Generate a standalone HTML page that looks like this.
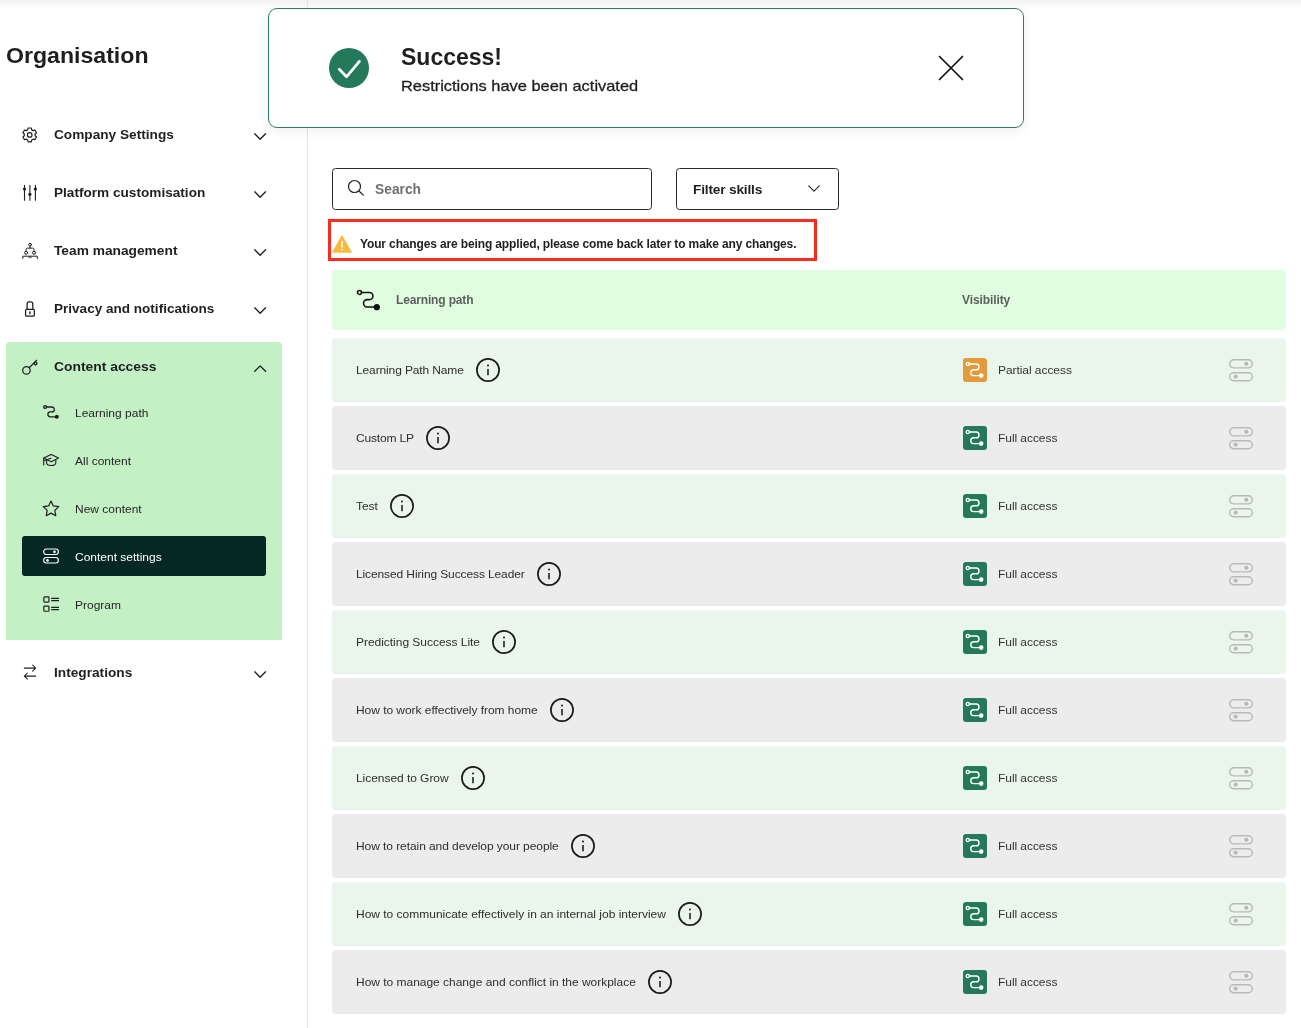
<!DOCTYPE html>
<html>
<head>
<meta charset="utf-8">
<title>Organisation</title>
<style>
*{box-sizing:border-box;margin:0;padding:0}
html,body{width:1301px;height:1028px;overflow:hidden;background:#fff}
body{font-family:"Liberation Sans",sans-serif;color:#1a1a1a;position:relative;will-change:transform}
svg{display:block;overflow:visible}
.topshadow{position:absolute;left:0;top:0;width:1301px;height:10px;background:linear-gradient(#f2f2f2 0,#f4f4f4 20%,#f8f8f8 38%,#fbfbfb 52%,#fdfdfd 75%,#fff 100%)}
.sidebar{position:absolute;left:0;top:0;width:308px;height:1028px;border-right:1px solid #e6e6e6}
.org{position:absolute;left:6px;top:42px;font-size:22.5px;font-weight:bold;color:#1f1f1f;line-height:28px;transform:scaleX(1.027);transform-origin:0 0;white-space:nowrap}
.nav{position:absolute;left:6px;width:276px;height:56px}
.nav .ic{position:absolute;left:14px;top:19px;width:20px;height:20px}
.nav .lbl{position:absolute;left:48px;top:19px;font-size:13px;font-weight:bold;color:#1f1f1f;line-height:18px;white-space:nowrap;transform:scaleX(1.047);transform-origin:0 0}
.nav .chev{position:absolute;left:247.8px;top:26.4px;width:12.3px;height:7.2px}
.group{position:absolute;left:6px;top:342px;width:276px;height:298px;background:#c3f1c5;border-radius:4px 4px 0 0}
.sub{position:absolute;left:16px;width:244px;height:40px;border-radius:3px}
.sub .ic{position:absolute;left:20px;top:11px;width:18px;height:18px}
.sub .lbl{position:absolute;left:53px;top:12px;font-size:12px;color:#262626;line-height:16px;white-space:nowrap;transform:scaleY(0.92);transform-origin:0 75%}
.sub.active{background:#052822}
.sub.active .lbl{color:#fff;top:13px}
.toast{position:absolute;left:268px;top:8px;width:756px;height:120px;background:#fff;border:1px solid #2b7e63;border-radius:9px;box-shadow:0 3px 12px rgba(0,0,0,0.07)}
.toast .ok{position:absolute;left:60px;top:39px;width:40px;height:40px;border-radius:50%;background:#24795b}
.toast .t1{position:absolute;left:132px;top:34px;font-size:23px;font-weight:bold;color:#1f1f1f;line-height:28px}
.toast .t2{position:absolute;left:132px;top:68px;font-size:15px;color:#1f1f1f;line-height:18px;white-space:nowrap;transform:scaleX(1.094);transform-origin:0 0;-webkit-text-stroke:0.3px #1f1f1f}
.toast .x{position:absolute;left:669px;top:46px;width:26px;height:26px}
.search{position:absolute;left:332px;top:168px;width:320px;height:42px;border:1px solid #2a2a2a;border-radius:3.5px}
.search .lbl{position:absolute;left:42px;top:13px;font-size:13.8px;font-weight:bold;color:#707070;line-height:16px}
.search svg{position:absolute;left:14px;top:10px;width:18px;height:18px}
.filter{position:absolute;left:676px;top:168px;width:163px;height:42px;border:1px solid #2a2a2a;border-radius:3.5px}
.filter .lbl{position:absolute;left:16px;top:13px;font-size:13.7px;font-weight:bold;color:#1f1f1f;line-height:16px;letter-spacing:-0.18px}
.filter svg{position:absolute;left:131px;top:16.2px;width:12px;height:7.02px}
.warn{position:absolute;left:328px;top:219px;width:489px;height:42px;border:3px solid #f62d20}
.warn .lbl{position:absolute;left:29px;top:15px;font-size:12px;font-weight:bold;color:#1f1f1f;line-height:14px;white-space:nowrap;letter-spacing:-0.137px}
.warn svg{position:absolute;left:1px;top:13px;width:20px;height:18px}
.row{position:absolute;left:332px;width:954px;height:64px;border-radius:4px}
.row.h{top:270px;height:60px;background:#e0fddf}
.row.g{background:#eaf5eb}
.row.n{background:#ececec}
.row .name{position:absolute;left:24px;top:0;height:64px;display:flex;align-items:center;font-size:12px;color:#2e2e2e;white-space:nowrap;letter-spacing:-0.02px}
.row .name span{display:block;line-height:16px;transform:scaleY(0.92);transform-origin:0 75%}
.row .name svg{margin-left:11px;width:26px;height:26px;flex:none;position:relative;top:-0.3px}
.row .badge{position:absolute;left:631px;top:20px;width:24px;height:24px;border-radius:3px;background:#24795b}
.row .badge.p{background:#e39a3a}
.row .acc{position:absolute;left:666px;top:23.5px;font-size:12px;color:#333;line-height:16px;white-space:nowrap;letter-spacing:-0.06px;transform:scaleY(0.92);transform-origin:0 75%}
.row .tog{position:absolute;left:896px;top:20px;width:26px;height:24px}
.row.h .hl{position:absolute;left:64px;top:22px;font-size:12px;font-weight:bold;color:#5e5e5e;line-height:16px;letter-spacing:-0.15px}
.row.h .hv{position:absolute;left:630px;top:22px;font-size:12px;font-weight:bold;color:#5e5e5e;line-height:16px;letter-spacing:-0.1px}
.row.h svg{position:absolute;left:23px;top:17px;width:27px;height:26px}
</style>
</head>
<body>
<div class="topshadow"></div>
<div class="sidebar"></div>
<div class="org">Organisation</div>
<div class="nav" style="top:107px"><svg class="ic" viewBox="0 0 20 20"><path d="M8.1 1.98 L11.3 1.98 L11.67 3.77 L13.16 4.63 L14.89 4.06 L16.49 6.82 L15.13 8.04 L15.13 9.76 L16.49 10.98 L14.89 13.74 L13.16 13.17 L11.67 14.03 L11.3 15.82 L8.1 15.82 L7.73 14.03 L6.24 13.17 L4.51 13.74 L2.91 10.98 L4.27 9.76 L4.27 8.04 L2.91 6.82 L4.51 4.06 L6.24 4.63 L7.73 3.77Z" fill="none" stroke="#1f1f1f" stroke-width="1.2" stroke-linejoin="round"/><circle cx="9.7" cy="8.9" r="2.3" fill="none" stroke="#1f1f1f" stroke-width="1.2"/></svg><span class="lbl" style="transform:scaleX(1.05)">Company Settings</span><svg class="chev" viewBox="0 0 12.3 7.2"><path d="M0.75 0.85 L6.15 6.3 L11.55 0.85" fill="none" stroke="#1f1f1f" stroke-width="1.35" stroke-linecap="round" stroke-linejoin="round"/></svg></div>
<div class="nav" style="top:165px"><svg class="ic" viewBox="0 0 20 20"><path d="M4.5 1.3v15M9.900 1.300v15M15.400 1.300v15" stroke="#1f1f1f" stroke-width="1.100" stroke-linecap="round"/><circle cx="4.500" cy="5" r="1.600" fill="#1f1f1f"/><circle cx="9.900" cy="10.300" r="1.600" fill="#1f1f1f"/><circle cx="15.400" cy="5" r="1.600" fill="#1f1f1f"/></svg><span class="lbl" style="transform:scaleX(1.047)">Platform customisation</span><svg class="chev" viewBox="0 0 12.3 7.2"><path d="M0.75 0.85 L6.15 6.3 L11.55 0.85" fill="none" stroke="#1f1f1f" stroke-width="1.35" stroke-linecap="round" stroke-linejoin="round"/></svg></div>
<div class="nav" style="top:223px"><svg class="ic" viewBox="0 0 20 20"><g fill="none" stroke="#1f1f1f" stroke-width="1" stroke-linecap="round" stroke-linejoin="round"><circle cx="10.050" cy="2.700" r="1.400"/><path d="M10.050 4.300v1.800M6.100 9.300V7.600a1.500 1.500 0 0 1 1.500-1.500h4.900a1.500 1.500 0 0 1 1.500 1.500v1.700"/><circle cx="6.100" cy="10.800" r="1.500"/><circle cx="14" cy="10.800" r="1.500"/><path d="M2.800 16.500v-2.300h14.500v2.300M8.800 15.600l1.250-.9 1.250 .9"/></g></svg><span class="lbl" style="transform:scaleX(1.057)">Team management</span><svg class="chev" viewBox="0 0 12.3 7.2"><path d="M0.75 0.85 L6.15 6.3 L11.55 0.85" fill="none" stroke="#1f1f1f" stroke-width="1.35" stroke-linecap="round" stroke-linejoin="round"/></svg></div>
<div class="nav" style="top:281px"><svg class="ic" viewBox="0 0 20 20"><g fill="none" stroke="#1f1f1f" stroke-width="1.250" stroke-linejoin="round"><rect x="5.600" y="9.400" width="8.700" height="6.700" rx="0.900"/><path d="M7.100 9.400V3.900a2 2 0 0 1 2-2h1.700a2 2 0 0 1 2 2V9.400"/></g><rect x="9.250" y="11.300" width="1.400" height="2.900" rx="0.500" fill="#1f1f1f"/></svg><span class="lbl" style="transform:scaleX(1.042)">Privacy and notifications</span><svg class="chev" viewBox="0 0 12.3 7.2"><path d="M0.75 0.85 L6.15 6.3 L11.55 0.85" fill="none" stroke="#1f1f1f" stroke-width="1.35" stroke-linecap="round" stroke-linejoin="round"/></svg></div>
<div class="group">
<div class="nav" style="left:0;top:-3px"><svg class="ic" viewBox="0 0 20 20"><g fill="none" stroke="#1f1f1f" stroke-width="1.250" stroke-linejoin="round" stroke-linecap="round"><circle cx="6.450" cy="12.400" r="3.750"/><path d="M9.200 9.700 L16.700 2.300"/><path d="M13.700 5.300 L15.500 7.100 L17.100 5.500 L15.300 3.700"/></g></svg><span class="lbl" style="transform:scaleX(1.066)">Content access</span><svg class="chev" viewBox="0 0 12.3 7.2"><path d="M0.75 6.35 L6.15 0.9 L11.55 6.35" fill="none" stroke="#1f1f1f" stroke-width="1.35" stroke-linecap="round" stroke-linejoin="round"/></svg></div>
<div class="sub" style="top:51px"><svg class="ic" viewBox="0 0 18 18"><g fill="none" stroke="#1f1f1f" stroke-width="1.3" stroke-linecap="round"><circle cx="3.1" cy="3" r="1.4"/><path d="M4.5 3 H9.9 a2.45 2.45 0 0 1 0 4.9 H8.3 a2.45 2.45 0 0 0 0 4.9 H14.8"/></g><circle cx="14.8" cy="12.8" r="2.0" fill="#1f1f1f"/></svg><span class="lbl">Learning path</span></div>
<div class="sub" style="top:99px"><svg class="ic" viewBox="0 0 18 18"><g fill="none" stroke="#1f1f1f" stroke-width="1.100" stroke-linejoin="round" stroke-linecap="round"><path d="M1.700 6.100L9.200 2.500l7.400 3.600L9.200 9.700z"/><path d="M4.600 7.800v3.300c0 3.200 9.200 3.200 9.200 0V7.800"/><path d="M1.700 6.100v6.900M9 6.200L2.600 8.400"/></g></svg><span class="lbl">All content</span></div>
<div class="sub" style="top:147px"><svg class="ic" viewBox="0 0 18 18"><path d="M9 1.05 L11.35 5.91 L16.7 6.65 L12.8 10.39 L13.76 15.7 L9 13.15 L4.24 15.7 L5.2 10.39 L1.3 6.65 L6.65 5.91Z" fill="none" stroke="#1f1f1f" stroke-width="1.200" stroke-linejoin="round"/></svg><span class="lbl">New content</span></div>
<div class="sub active" style="top:194px"><svg class="ic" viewBox="0 0 18 18"><g fill="none" stroke="#fff" stroke-width="1.100"><rect x="1.650" y="2.050" width="14.700" height="5.500" rx="2.750"/><rect x="1.650" y="10.550" width="14.700" height="5.500" rx="2.750"/></g><circle cx="12.500" cy="4.800" r="1.350" fill="#fff"/><circle cx="5.500" cy="13.400" r="1.350" fill="#fff"/></svg><span class="lbl">Content settings</span></div>
<div class="sub" style="top:243px"><svg class="ic" viewBox="0 0 18 18"><g fill="none" stroke="#1f1f1f" stroke-width="1.200"><rect x="1.850" y="0.950" width="5.100" height="5.100" rx="0.700"/><rect x="1.850" y="10.150" width="5.100" height="5.100" rx="0.700"/><path d="M9.200 2.300h7.800M9.200 4.700h7.800M9.200 11.300h7.800M9.200 13.700h7.800"/></g></svg><span class="lbl">Program</span></div>
</div>
<div class="nav" style="top:645px"><svg class="ic" viewBox="0 0 20 20"><g fill="none" stroke="#1f1f1f" stroke-width="1.050" stroke-linejoin="round" stroke-linecap="round"><path d="M4.300 4.100H15.600M12.600 1l3.100 3.100-3.100 3.100"/><path d="M15.700 12.100H4.300M7.400 9l-3.100 3.100 3.100 3.100"/></g></svg><span class="lbl" style="transform:scaleX(1.052)">Integrations</span><svg class="chev" viewBox="0 0 12.3 7.2"><path d="M0.75 0.85 L6.15 6.3 L11.55 0.85" fill="none" stroke="#1f1f1f" stroke-width="1.35" stroke-linecap="round" stroke-linejoin="round"/></svg></div>
<div class="toast">
<div class="ok"><svg viewBox="0 0 40 40" width="40" height="40"><path d="M10.300 21.300 L17.500 28.800 L30.400 13.300" fill="none" stroke="#fff" stroke-width="2.700" stroke-linecap="round" stroke-linejoin="round"/></svg></div>
<div class="t1">Success!</div>
<div class="t2">Restrictions have been activated</div>
<svg class="x" viewBox="0 0 26 26"><path d="M1.500 1.500 L24.500 24.500 M24.500 1.500 L1.500 24.500" fill="none" stroke="#111" stroke-width="1.750" stroke-linecap="round"/></svg>
</div>
<div class="search"><svg viewBox="0 0 18 18"><circle cx="7.500" cy="7.500" r="6" fill="none" stroke="#1f1f1f" stroke-width="1.200"/><path d="M12 12L16.300 16.100" stroke="#1f1f1f" stroke-width="1.300" stroke-linecap="round"/></svg><span class="lbl">Search</span></div>
<div class="filter"><span class="lbl">Filter skills</span><svg class="" viewBox="0 0 12.3 7.2"><path d="M0.75 0.85 L6.15 6.3 L11.55 0.85" fill="none" stroke="#1f1f1f" stroke-width="1.15" stroke-linecap="round" stroke-linejoin="round"/></svg></div>
<div class="warn"><svg viewBox="0 0 20 18"><path d="M10 1.200 L19 17 H1 Z" fill="#f9b93e" stroke="#f9b93e" stroke-width="1.400" stroke-linejoin="round"/><path d="M10 6.500v5.500" stroke="#fff" stroke-width="1.500" stroke-linecap="round"/><circle cx="10" cy="14.600" r="0.950" fill="#fff"/></svg><span class="lbl">Your changes are being applied, please come back later to make any changes.</span></div>
<div class="row h"><svg class="" viewBox="0 0 27 26"><g fill="none" stroke="#111" stroke-width="1.55" stroke-linecap="round"><circle cx="4.5" cy="5.4" r="2.0"/><path d="M6.5 5.4 H14.4 a3.6 3.6 0 0 1 0 7.2 H12.2 a3.65 3.65 0 0 0 0 7.3 H21.8"/></g><circle cx="21.8" cy="20.2" r="3.1" fill="#111"/></svg><span class="hl">Learning path</span><span class="hv">Visibility</span></div>
<div class="row g" style="top:338px"><div class="name"><span style="letter-spacing:-0.127px">Learning Path Name</span><svg viewBox="0 0 26 26"><circle cx="13" cy="13" r="11.100" fill="none" stroke="#1a1a1a" stroke-width="1.700"/><circle cx="13" cy="8.600" r="1" fill="#1a1a1a"/><path d="M13 11.900v6.300" stroke="#1a1a1a" stroke-width="1.550"/></svg></div><div class="badge p"><svg class="" viewBox="0 0 24 24"><g fill="none" stroke="#fff" stroke-width="1.4" stroke-linecap="round"><circle cx="4.8" cy="6" r="1.6"/><path d="M6.4 6 H13.1 a2.9 2.9 0 0 1 0 5.8 H10.7 a2.9 2.9 0 0 0 0 5.8 H18.2"/></g><circle cx="18.2" cy="17.6" r="2.3" fill="#fff"/></svg></div><span class="acc">Partial access</span><svg class="tog" viewBox="0 0 26 24"><g fill="none" stroke="#b9b9b9" stroke-width="1.400"><rect x="1.700" y="1.700" width="22.600" height="8.200" rx="4.100"/><rect x="1.700" y="14.700" width="22.600" height="8" rx="4"/></g><circle cx="18.300" cy="5.800" r="2.100" fill="#b9b9b9"/><circle cx="7.700" cy="18.600" r="2.100" fill="#b9b9b9"/></svg></div>
<div class="row n" style="top:406px"><div class="name"><span style="letter-spacing:-0.162px">Custom LP</span><svg viewBox="0 0 26 26"><circle cx="13" cy="13" r="11.100" fill="none" stroke="#1a1a1a" stroke-width="1.700"/><circle cx="13" cy="8.600" r="1" fill="#1a1a1a"/><path d="M13 11.900v6.300" stroke="#1a1a1a" stroke-width="1.550"/></svg></div><div class="badge"><svg class="" viewBox="0 0 24 24"><g fill="none" stroke="#fff" stroke-width="1.4" stroke-linecap="round"><circle cx="4.8" cy="6" r="1.6"/><path d="M6.4 6 H13.1 a2.9 2.9 0 0 1 0 5.8 H10.7 a2.9 2.9 0 0 0 0 5.8 H18.2"/></g><circle cx="18.2" cy="17.6" r="2.3" fill="#fff"/></svg></div><span class="acc">Full access</span><svg class="tog" viewBox="0 0 26 24"><g fill="none" stroke="#b9b9b9" stroke-width="1.400"><rect x="1.700" y="1.700" width="22.600" height="8.200" rx="4.100"/><rect x="1.700" y="14.700" width="22.600" height="8" rx="4"/></g><circle cx="18.300" cy="5.800" r="2.100" fill="#b9b9b9"/><circle cx="7.700" cy="18.600" r="2.100" fill="#b9b9b9"/></svg></div>
<div class="row g" style="top:474px"><div class="name"><span style="letter-spacing:-0.054px">Test</span><svg viewBox="0 0 26 26"><circle cx="13" cy="13" r="11.100" fill="none" stroke="#1a1a1a" stroke-width="1.700"/><circle cx="13" cy="8.600" r="1" fill="#1a1a1a"/><path d="M13 11.900v6.300" stroke="#1a1a1a" stroke-width="1.550"/></svg></div><div class="badge"><svg class="" viewBox="0 0 24 24"><g fill="none" stroke="#fff" stroke-width="1.4" stroke-linecap="round"><circle cx="4.8" cy="6" r="1.6"/><path d="M6.4 6 H13.1 a2.9 2.9 0 0 1 0 5.8 H10.7 a2.9 2.9 0 0 0 0 5.8 H18.2"/></g><circle cx="18.2" cy="17.6" r="2.3" fill="#fff"/></svg></div><span class="acc">Full access</span><svg class="tog" viewBox="0 0 26 24"><g fill="none" stroke="#b9b9b9" stroke-width="1.400"><rect x="1.700" y="1.700" width="22.600" height="8.200" rx="4.100"/><rect x="1.700" y="14.700" width="22.600" height="8" rx="4"/></g><circle cx="18.300" cy="5.800" r="2.100" fill="#b9b9b9"/><circle cx="7.700" cy="18.600" r="2.100" fill="#b9b9b9"/></svg></div>
<div class="row n" style="top:542px"><div class="name"><span style="letter-spacing:-0.114px">Licensed Hiring Success Leader</span><svg viewBox="0 0 26 26"><circle cx="13" cy="13" r="11.100" fill="none" stroke="#1a1a1a" stroke-width="1.700"/><circle cx="13" cy="8.600" r="1" fill="#1a1a1a"/><path d="M13 11.900v6.300" stroke="#1a1a1a" stroke-width="1.550"/></svg></div><div class="badge"><svg class="" viewBox="0 0 24 24"><g fill="none" stroke="#fff" stroke-width="1.4" stroke-linecap="round"><circle cx="4.8" cy="6" r="1.6"/><path d="M6.4 6 H13.1 a2.9 2.9 0 0 1 0 5.8 H10.7 a2.9 2.9 0 0 0 0 5.8 H18.2"/></g><circle cx="18.2" cy="17.6" r="2.3" fill="#fff"/></svg></div><span class="acc">Full access</span><svg class="tog" viewBox="0 0 26 24"><g fill="none" stroke="#b9b9b9" stroke-width="1.400"><rect x="1.700" y="1.700" width="22.600" height="8.200" rx="4.100"/><rect x="1.700" y="14.700" width="22.600" height="8" rx="4"/></g><circle cx="18.300" cy="5.800" r="2.100" fill="#b9b9b9"/><circle cx="7.700" cy="18.600" r="2.100" fill="#b9b9b9"/></svg></div>
<div class="row g" style="top:610px"><div class="name"><span style="letter-spacing:-0.032px">Predicting Success Lite</span><svg viewBox="0 0 26 26"><circle cx="13" cy="13" r="11.100" fill="none" stroke="#1a1a1a" stroke-width="1.700"/><circle cx="13" cy="8.600" r="1" fill="#1a1a1a"/><path d="M13 11.900v6.300" stroke="#1a1a1a" stroke-width="1.550"/></svg></div><div class="badge"><svg class="" viewBox="0 0 24 24"><g fill="none" stroke="#fff" stroke-width="1.4" stroke-linecap="round"><circle cx="4.8" cy="6" r="1.6"/><path d="M6.4 6 H13.1 a2.9 2.9 0 0 1 0 5.8 H10.7 a2.9 2.9 0 0 0 0 5.8 H18.2"/></g><circle cx="18.2" cy="17.6" r="2.3" fill="#fff"/></svg></div><span class="acc">Full access</span><svg class="tog" viewBox="0 0 26 24"><g fill="none" stroke="#b9b9b9" stroke-width="1.400"><rect x="1.700" y="1.700" width="22.600" height="8.200" rx="4.100"/><rect x="1.700" y="14.700" width="22.600" height="8" rx="4"/></g><circle cx="18.300" cy="5.800" r="2.100" fill="#b9b9b9"/><circle cx="7.700" cy="18.600" r="2.100" fill="#b9b9b9"/></svg></div>
<div class="row n" style="top:678px"><div class="name"><span style="letter-spacing:-0.048px">How to work effectively from home</span><svg viewBox="0 0 26 26"><circle cx="13" cy="13" r="11.100" fill="none" stroke="#1a1a1a" stroke-width="1.700"/><circle cx="13" cy="8.600" r="1" fill="#1a1a1a"/><path d="M13 11.900v6.300" stroke="#1a1a1a" stroke-width="1.550"/></svg></div><div class="badge"><svg class="" viewBox="0 0 24 24"><g fill="none" stroke="#fff" stroke-width="1.4" stroke-linecap="round"><circle cx="4.8" cy="6" r="1.6"/><path d="M6.4 6 H13.1 a2.9 2.9 0 0 1 0 5.8 H10.7 a2.9 2.9 0 0 0 0 5.8 H18.2"/></g><circle cx="18.2" cy="17.6" r="2.3" fill="#fff"/></svg></div><span class="acc">Full access</span><svg class="tog" viewBox="0 0 26 24"><g fill="none" stroke="#b9b9b9" stroke-width="1.400"><rect x="1.700" y="1.700" width="22.600" height="8.200" rx="4.100"/><rect x="1.700" y="14.700" width="22.600" height="8" rx="4"/></g><circle cx="18.300" cy="5.800" r="2.100" fill="#b9b9b9"/><circle cx="7.700" cy="18.600" r="2.100" fill="#b9b9b9"/></svg></div>
<div class="row g" style="top:746px"><div class="name"><span style="letter-spacing:-0.049px">Licensed to Grow</span><svg viewBox="0 0 26 26"><circle cx="13" cy="13" r="11.100" fill="none" stroke="#1a1a1a" stroke-width="1.700"/><circle cx="13" cy="8.600" r="1" fill="#1a1a1a"/><path d="M13 11.900v6.300" stroke="#1a1a1a" stroke-width="1.550"/></svg></div><div class="badge"><svg class="" viewBox="0 0 24 24"><g fill="none" stroke="#fff" stroke-width="1.4" stroke-linecap="round"><circle cx="4.8" cy="6" r="1.6"/><path d="M6.4 6 H13.1 a2.9 2.9 0 0 1 0 5.8 H10.7 a2.9 2.9 0 0 0 0 5.8 H18.2"/></g><circle cx="18.2" cy="17.6" r="2.3" fill="#fff"/></svg></div><span class="acc">Full access</span><svg class="tog" viewBox="0 0 26 24"><g fill="none" stroke="#b9b9b9" stroke-width="1.400"><rect x="1.700" y="1.700" width="22.600" height="8.200" rx="4.100"/><rect x="1.700" y="14.700" width="22.600" height="8" rx="4"/></g><circle cx="18.300" cy="5.800" r="2.100" fill="#b9b9b9"/><circle cx="7.700" cy="18.600" r="2.100" fill="#b9b9b9"/></svg></div>
<div class="row n" style="top:814px"><div class="name"><span style="letter-spacing:-0.075px">How to retain and develop your people</span><svg viewBox="0 0 26 26"><circle cx="13" cy="13" r="11.100" fill="none" stroke="#1a1a1a" stroke-width="1.700"/><circle cx="13" cy="8.600" r="1" fill="#1a1a1a"/><path d="M13 11.900v6.300" stroke="#1a1a1a" stroke-width="1.550"/></svg></div><div class="badge"><svg class="" viewBox="0 0 24 24"><g fill="none" stroke="#fff" stroke-width="1.4" stroke-linecap="round"><circle cx="4.8" cy="6" r="1.6"/><path d="M6.4 6 H13.1 a2.9 2.9 0 0 1 0 5.8 H10.7 a2.9 2.9 0 0 0 0 5.8 H18.2"/></g><circle cx="18.2" cy="17.6" r="2.3" fill="#fff"/></svg></div><span class="acc">Full access</span><svg class="tog" viewBox="0 0 26 24"><g fill="none" stroke="#b9b9b9" stroke-width="1.400"><rect x="1.700" y="1.700" width="22.600" height="8.200" rx="4.100"/><rect x="1.700" y="14.700" width="22.600" height="8" rx="4"/></g><circle cx="18.300" cy="5.800" r="2.100" fill="#b9b9b9"/><circle cx="7.700" cy="18.600" r="2.100" fill="#b9b9b9"/></svg></div>
<div class="row g" style="top:882px"><div class="name"><span style="letter-spacing:-0.012px">How to communicate effectively in an internal job interview</span><svg viewBox="0 0 26 26"><circle cx="13" cy="13" r="11.100" fill="none" stroke="#1a1a1a" stroke-width="1.700"/><circle cx="13" cy="8.600" r="1" fill="#1a1a1a"/><path d="M13 11.900v6.300" stroke="#1a1a1a" stroke-width="1.550"/></svg></div><div class="badge"><svg class="" viewBox="0 0 24 24"><g fill="none" stroke="#fff" stroke-width="1.4" stroke-linecap="round"><circle cx="4.8" cy="6" r="1.6"/><path d="M6.4 6 H13.1 a2.9 2.9 0 0 1 0 5.8 H10.7 a2.9 2.9 0 0 0 0 5.8 H18.2"/></g><circle cx="18.2" cy="17.6" r="2.3" fill="#fff"/></svg></div><span class="acc">Full access</span><svg class="tog" viewBox="0 0 26 24"><g fill="none" stroke="#b9b9b9" stroke-width="1.400"><rect x="1.700" y="1.700" width="22.600" height="8.200" rx="4.100"/><rect x="1.700" y="14.700" width="22.600" height="8" rx="4"/></g><circle cx="18.300" cy="5.800" r="2.100" fill="#b9b9b9"/><circle cx="7.700" cy="18.600" r="2.100" fill="#b9b9b9"/></svg></div>
<div class="row n" style="top:950px"><div class="name"><span style="letter-spacing:-0.021px">How to manage change and conflict in the workplace</span><svg viewBox="0 0 26 26"><circle cx="13" cy="13" r="11.100" fill="none" stroke="#1a1a1a" stroke-width="1.700"/><circle cx="13" cy="8.600" r="1" fill="#1a1a1a"/><path d="M13 11.900v6.300" stroke="#1a1a1a" stroke-width="1.550"/></svg></div><div class="badge"><svg class="" viewBox="0 0 24 24"><g fill="none" stroke="#fff" stroke-width="1.4" stroke-linecap="round"><circle cx="4.8" cy="6" r="1.6"/><path d="M6.4 6 H13.1 a2.9 2.9 0 0 1 0 5.8 H10.7 a2.9 2.9 0 0 0 0 5.8 H18.2"/></g><circle cx="18.2" cy="17.6" r="2.3" fill="#fff"/></svg></div><span class="acc">Full access</span><svg class="tog" viewBox="0 0 26 24"><g fill="none" stroke="#b9b9b9" stroke-width="1.400"><rect x="1.700" y="1.700" width="22.600" height="8.200" rx="4.100"/><rect x="1.700" y="14.700" width="22.600" height="8" rx="4"/></g><circle cx="18.300" cy="5.800" r="2.100" fill="#b9b9b9"/><circle cx="7.700" cy="18.600" r="2.100" fill="#b9b9b9"/></svg></div>
</body>
</html>
